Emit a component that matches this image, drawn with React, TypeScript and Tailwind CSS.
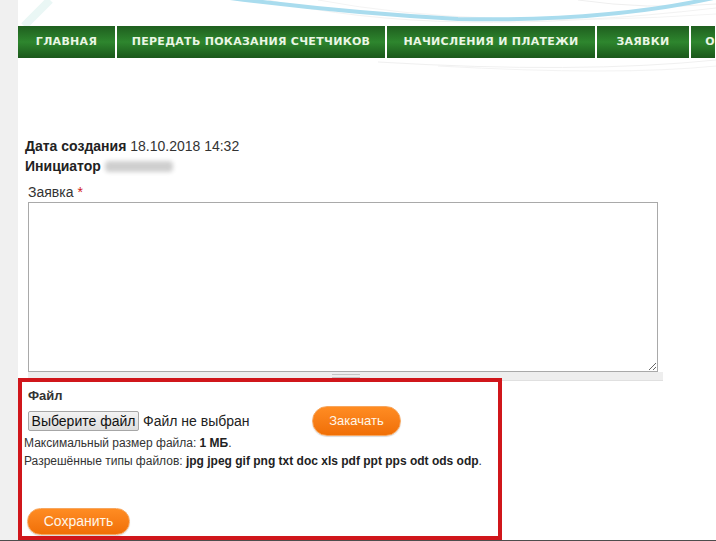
import React from "react";

// Форма заявки: шапка с меню, блок с датой/инициатором, текст заявки и блок загрузки файла.

const NAV = [
  { label: "Главная", w: "w-[97px]" },
  { label: "Передать показания счетчиков", w: "w-[268px]" },
  { label: "Начисления и платежи", w: "w-[208px]" },
  { label: "Заявки", w: "w-[92px]" },
  { label: "О", w: "w-[24px]" },
];

function HeaderArt() {
  return (
    <svg
      className="pointer-events-none absolute left-0 top-0"
      width="698"
      height="72"
      viewBox="0 0 698 72"
      fill="none"
    >
      <path d="M6 26 Q 20 12 32 0" stroke="#eaf7f5" strokeWidth="8" />
      <path d="M250 0 Q 420 40 698 8" stroke="#f2f2f2" strokeWidth="1" />
      <path d="M300 0 Q 460 30 698 14" stroke="#f4f4f4" strokeWidth="1" />
      <path d="M560 0 Q 630 10 698 4" stroke="#efefef" strokeWidth="1" />
      <path d="M360 62 Q 560 74 698 60" stroke="#f0f0f0" strokeWidth="1" />
      <path d="M420 66 Q 600 76 698 66" stroke="#f3f3f3" strokeWidth="1" />
      <path
        d="M212 -2 Q 330 13 440 19 Q 590 22 700 -3"
        stroke="#a9dcee"
        strokeWidth="4"
      />
    </svg>
  );
}

function Pill({ children, className }: { children: React.ReactNode; className: string }) {
  return (
    <button
      type="button"
      className={`rounded-full border border-[#f7a65e] bg-gradient-to-b from-[#ff8c22] to-[#f06f05] text-[#fff6e8] shadow-[0_1px_1px_rgba(0,0,0,0.15)] ${className}`}
    >
      {children}
    </button>
  );
}

export default function App() {
  return (
    <div className="flex h-[541px] w-[716px] flex-col overflow-hidden bg-white font-['Liberation_Sans',Arial,sans-serif] text-[#333]">
      <div className="flex h-[540px]">
        <div className="w-[18px] shrink-0 bg-[#f0f0f0]" />

        <main className="relative flex-1">
          <HeaderArt />

          <nav className="relative mt-[26px] flex h-[32px] gap-[2px] bg-white">
            {NAV.map((item, i) => (
              <div
                key={item.label}
                className={`${item.w} flex shrink-0 items-center whitespace-nowrap bg-gradient-to-b from-[#1f5f1f] via-[#2e862e] to-[#1b581b] font-['DejaVu_Sans',Verdana,sans-serif] text-[11px] font-bold uppercase tracking-[0.3px] text-[#eaf6e4] ${
                  i === NAV.length - 1 ? "justify-end" : "justify-center"
                }`}
              >
                {item.label}
              </div>
            ))}
          </nav>

          <section className="mt-[78px] pl-[7px] text-[14px] leading-5">
            <p>
              <b className="text-[#222]">Дата создания</b> 18.10.2018 14:32
            </p>
            <p className="flex items-center gap-[4px]">
              <b className="text-[#222]">Инициатор</b>
              <span className="h-[11px] w-[68px] rounded-sm bg-[#cfcfcf] blur-[2px]" />
            </p>
          </section>

          <label className="mt-[6px] block pl-[10px] text-[14px] leading-5">
            Заявка <span className="text-[#d01a1a]">*</span>
          </label>
          <textarea className="ml-[10px] block h-[170px] w-[630px] resize border border-[#a9a9a9] bg-white" />
          <div className="ml-[10px] flex h-[9px] w-[635px] items-center justify-center border-b border-[#e0e0e0] bg-[#eeeeee]">
            <div className="h-[4px] w-[28px] border-y border-[#c4c4c4]" />
          </div>

          <div className="relative -mt-[3px] h-[162px] w-[484px] border-[4px] border-[#d0161b] bg-white">
            <p className="pl-[6px] pt-[6px] text-[13px] font-bold leading-4 text-[#333]">Файл</p>

            <div className="mt-[2px] flex items-center pl-[6px]">
              <div className="flex w-[284px] items-center">
                <button
                  type="button"
                  className="h-[20px] w-[111px] rounded-[2px] border border-[#a6a6a6] bg-gradient-to-b from-[#f3f3f3] to-[#dedede] text-[14px] leading-none text-[#111]"
                >
                  Выберите файл
                </button>
                <span className="ml-[4px] text-[14px] text-[#222]">Файл не выбран</span>
              </div>
              <Pill className="h-[30px] w-[89px] text-[13px]">Закачать</Pill>
            </div>

            <p className="pl-[2px] text-[12px] leading-[14px]">
              Максимальный размер файла: <b className="text-[#222]">1 МБ</b>.
            </p>
            <p className="mt-[4px] pl-[2px] text-[12px] leading-[14px]">
              Разрешённые типы файлов:{" "}
              <b className="text-[#222]">jpg jpeg gif png txt doc xls pdf ppt pps odt ods odp</b>.
            </p>

            <Pill className="ml-[5px] mt-[40px] h-[27px] w-[103px] text-[14px]">Сохранить</Pill>
          </div>
        </main>
      </div>
      <div className="h-px bg-[#4d4d4d]" />
    </div>
  );
}
